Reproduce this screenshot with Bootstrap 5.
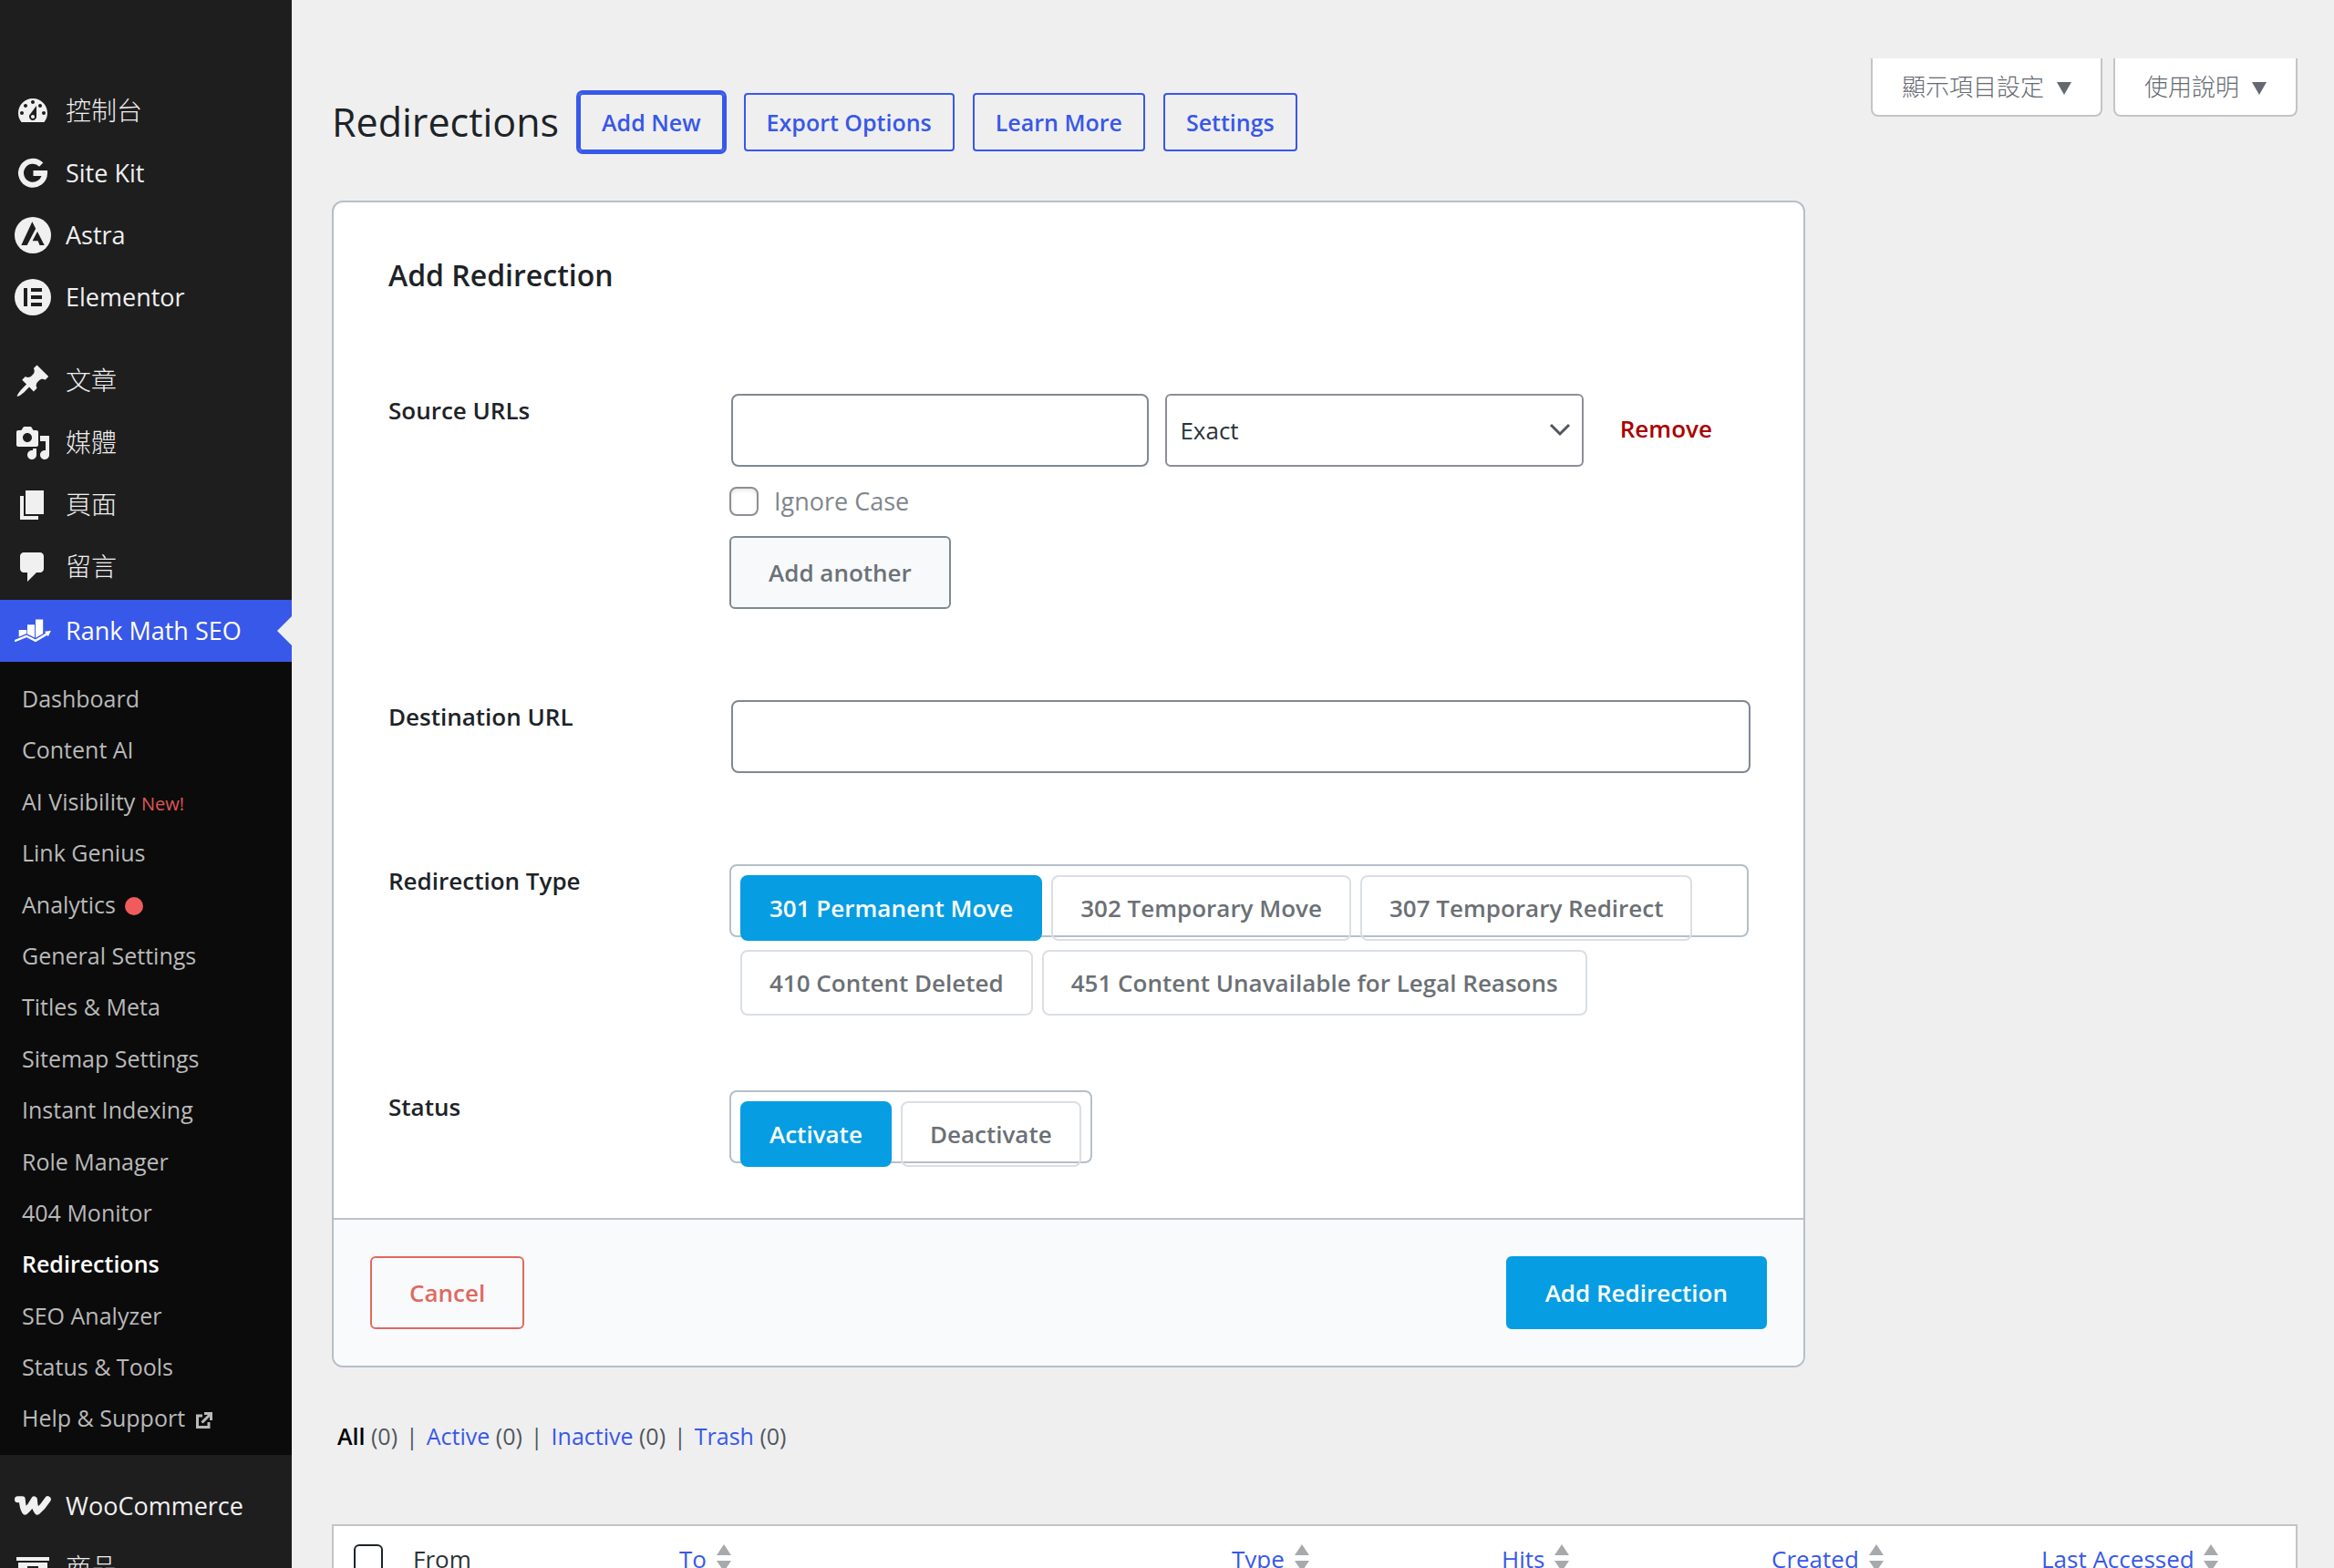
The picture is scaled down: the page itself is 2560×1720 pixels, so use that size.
<!DOCTYPE html>
<html lang="zh-Hant">
<head>
<meta charset="utf-8">
<meta name="viewport" content="width=device-width, initial-scale=1">
<title>Redirections</title>
<link href="https://cdn.jsdelivr.net/npm/bootstrap@5.3.0/dist/css/bootstrap.min.css" rel="stylesheet">
<style>
:root{--wp-blue:#3858e9;--rm-blue:#069de3;--rm-line:#b5bfc9;--wp-line:#c3c4c7}
body{background:#efefef;color:#2c3338;font-family:"Open Sans","Noto Sans CJK TC",sans-serif;font-size:26px;line-height:1.4}
a{text-decoration:none;color:var(--wp-blue)}
/* side menu */
.side-menu{width:320px;background:#1e1e1e;padding-top:88px}
.side-menu ul{list-style:none;margin:0;padding:0}
.menu-link{display:flex;align-items:center;gap:16px;height:68px;padding-left:16px;color:#f0f0f1;font-size:27px;white-space:nowrap}
.menu-link.han{font-size:28px;font-weight:300}
.menu-link svg{width:40px;height:40px;fill:currentColor;flex:none}
.menu-main{margin-bottom:24px!important}
.menu-content{margin-bottom:2px!important}
.menu-link.current{background:var(--wp-blue);color:#fff;position:relative}
.menu-link.current::after{content:"";position:absolute;right:0;top:18px;border:16px solid transparent;border-left:0;border-right-color:#efefef}
.side-menu .sub-menu{background:#0b0b0b;padding:12px 24px 12px;margin-bottom:22px}
.sub-menu li{line-height:1.4;padding:10px 0;white-space:nowrap}
.sub-menu a{color:#b9b9b9;font-size:25px}
.sub-menu a.current{color:#fff;font-weight:600}
.tag-new{color:#dd5753;font-size:20px}
.dot{width:20px;height:20px;background:#f05c5c;margin-left:4px;vertical-align:-2px}
.ext{width:20px;height:20px;fill:none;stroke:#b9b9b9;stroke-width:3;margin-left:4px;vertical-align:-3px}
/* content */
.content{padding:64px 40px 0 44px;min-width:0}
.page-title{font-size:43px;line-height:64px;color:#1d2327;font-weight:400;margin:0 22px 0 0}
.page-head{padding-top:38px;margin-bottom:54px}
.head-actions{gap:20px}
.btn-action{--bs-btn-color:var(--wp-blue);--bs-btn-border-color:var(--wp-blue);--bs-btn-hover-color:#fff;--bs-btn-hover-bg:var(--wp-blue);border-width:2px;border-radius:4px;height:64px;padding:0 23px;font-size:25px;font-weight:600;line-height:60px}
.btn-action.focused{box-shadow:0 0 0 3px var(--wp-blue);margin-right:2px}
.meta-tabs{gap:12px}
.meta-tab{background:#fff;border:2px solid var(--wp-line);border-top:0;border-radius:0 0 8px 8px;height:64px;padding:0 32px;color:#646970;font-size:26px;font-weight:300;display:flex;align-items:center;gap:14px}
.meta-tab::after{content:"";border:8px solid transparent;border-top:14px solid #646970;border-bottom:0;margin-top:4px}
.redirect-card{border:2px solid var(--rm-line);border-radius:12px;max-width:1616px;overflow:hidden}
.redirect-card .card-body{padding:56px 60px 60px}
.card-heading{font-size:32px;line-height:48px;font-weight:600;color:#1d2327;margin-bottom:106px}
.field-row+.field-row{margin-top:100px}
.field-label{width:374px;flex:none;font-size:26px;line-height:36px;font-weight:600;color:#1d2327}
.field-body{flex:1;min-width:0}
.field-body .form-control,.field-body .form-select{height:80px;border:2px solid #7e8993;font-size:26px;padding-left:14px;color:#2c3338}
.field-body .form-control{border-radius:8px;margin-left:2px}
.field-body .form-select{border-radius:6px;border-color:#8c8f94;background-image:url("data:image/svg+xml,%3Csvg xmlns='http://www.w3.org/2000/svg' viewBox='0 0 24 16'%3E%3Cpath d='M2 2l10 10L22 2' fill='none' stroke='%2350575e' stroke-width='3'/%3E%3C/svg%3E");background-size:24px 16px;background-position:right 12px center}
.source-row{gap:18px}
.source-row .form-control,.source-row .form-select{flex:0 0 41%;width:41%}
.remove-link{color:#a00;font-size:26px;line-height:36px;font-weight:600;margin-left:22px;padding-bottom:4px}
.tick{width:32px;height:32px;margin:0;border:2px solid #8c8f94;border-radius:8px!important;box-shadow:inset 0 2px 4px rgba(0,0,0,.1);flex:none}
.ignore-case{gap:17px;height:32px;margin:22px 0;color:#7f868d;font-size:27px}
.btn-panel{height:80px;border-width:2px;border-radius:6px;padding:0 41px;font-size:26px;font-weight:600}
.btn-another{--bs-btn-color:#6b7278;--bs-btn-bg:#f8f9fa;--bs-btn-border-color:#7e8993}
.btn-cancel{--bs-btn-color:#e0695f;--bs-btn-border-color:#e0695f}
.btn-submit{--bs-btn-color:#fff;--bs-btn-bg:var(--rm-blue);--bs-btn-border-color:var(--rm-blue)}
.field-tall{min-height:148px}
.choice-frame{height:80px;border:2px solid var(--rm-line);border-radius:8px;padding:10px;gap:10px;align-content:flex-start}
.choice{--bs-btn-color:#6b7075;--bs-btn-border-color:#dadfe4;--bs-btn-active-color:#fff;--bs-btn-active-bg:var(--rm-blue);--bs-btn-active-border-color:var(--rm-blue);border-width:2px;border-radius:8px;height:72px;line-height:68px;padding:0 30px;font-size:26px;font-weight:600;white-space:nowrap}
.redirect-card .card-footer{background:#f8fafc;border-top:2px solid #bcc1c7;padding:40px}
.filters{margin:55px 0 77px 6px;line-height:40px;font-size:25px;color:#50575e;gap:9px}
.filters .active-filter{color:#000;font-weight:600}
.list-table{border:2px solid var(--wp-line);background:#fff;table-layout:fixed;width:100%}
.list-table th{font-weight:400;font-size:26px;line-height:40px;padding:16px;white-space:nowrap;vertical-align:middle}
.list-table .tick{border-color:#1d2327;border-radius:6px!important;box-shadow:none;margin-left:6px;display:block}
.col-tick{width:72px}.col-from{width:292px}.col-num{width:296px}
.sorter{width:16px;height:30px;fill:#a7aaad;margin-left:4px;vertical-align:-4px}
</style>
</head>
<body>
<div class="d-flex vh-100 overflow-hidden">
<nav class="side-menu flex-shrink-0" aria-label="主選單">
<ul class="menu-main">
<li><a class="menu-link han" href="#"><svg viewBox="0 0 20 20"><path d="M3.76 16h12.48c1.1-1.37 1.76-3.11 1.76-5 0-4.42-3.58-8-8-8s-8 3.58-8 8c0 1.89.66 3.63 1.76 5zM10 4c.55 0 1 .45 1 1s-.45 1-1 1-1-.45-1-1 .45-1 1-1zM6 6c.55 0 1 .45 1 1s-.45 1-1 1-1-.45-1-1 .45-1 1-1zm8 0c.55 0 1 .45 1 1s-.45 1-1 1-1-.45-1-1 .45-1 1-1zm-5.37 5.55L12 7v6c0 1.1-.9 2-2 2s-2-.9-2-2c0-.57.24-1.08.63-1.45zM4 10c.55 0 1 .45 1 1s-.45 1-1 1-1-.45-1-1 .45-1 1-1zm12 0c.55 0 1 .45 1 1s-.45 1-1 1-1-.45-1-1 .45-1 1-1zm-5 3c0-.55-.45-1-1-1s-1 .45-1 1 .45 1 1 1 1-.45 1-1z"/></svg>控制台</a></li>
<li><a class="menu-link" href="#"><svg viewBox="0 0 40 40"><path d="M29.2 10.6A13 13 0 1 0 33 20H20.5" fill="none" stroke="currentColor" stroke-width="6"/></svg>Site Kit</a></li>
<li><a class="menu-link" href="#"><svg viewBox="0 0 40 40"><circle cx="20" cy="20" r="20"/><path fill="#1e1e1e" d="M19.3 5.3l3.9 7.4L13.7 31H7.3zM25 16l7.7 15h-5.2l-1.9-4.7h-6z"/></svg>Astra</a></li>
<li><a class="menu-link" href="#"><svg viewBox="0 0 40 40"><circle cx="20" cy="20" r="20"/><path fill="#1e1e1e" d="M10 10h4v20h-4zM18 10h12v4H18zM18 18h12v4H18zM18 26h12v4H18z"/></svg>Elementor</a></li>
</ul>
<ul class="menu-content">
<li><a class="menu-link han" href="#"><svg viewBox="0 0 20 20"><path d="M10.44 3.02l1.82-1.82 6.36 6.35-1.83 1.82c-1.05-.68-2.48-.57-3.41.36l-.75.75c-.92.93-1.04 2.35-.35 3.41l-1.83 1.82-2.41-2.41-2.8 2.79c-.42.42-3.38 2.71-3.8 2.29s1.86-3.39 2.28-3.81l2.79-2.79L4.1 9.36l1.83-1.82c1.05.69 2.48.57 3.4-.36l.75-.75c.93-.92 1.05-2.35.36-3.41z"/></svg>文章</a></li>
<li><a class="menu-link han" href="#"><svg viewBox="0 0 20 20"><path d="M13 11V4c0-.55-.45-1-1-1h-1.67L9 1H5L3.67 3H2c-.55 0-1 .45-1 1v7c0 .55.45 1 1 1h10c.55 0 1-.45 1-1zM7 4.5c1.38 0 2.5 1.12 2.5 2.5S8.38 9.5 7 9.5 4.5 8.38 4.5 7 5.62 4.5 7 4.5zM14 6h5v10.5c0 1.38-1.12 2.5-2.5 2.5S14 17.88 14 16.5s1.12-2.5 2.5-2.5c.17 0 .34.02.5.05V9h-3V6zm-4 8.05V13h2v3.5c0 1.38-1.12 2.5-2.5 2.5S7 17.88 7 16.5 8.12 14 9.5 14c.17 0 .34.02.5.05z"/></svg>媒體</a></li>
<li><a class="menu-link han" href="#"><svg viewBox="0 0 20 20"><path d="M6 15V2h10v13H6zm-1 1h8v2H3V5h2v11z"/></svg>頁面</a></li>
<li><a class="menu-link han" href="#"><svg viewBox="0 0 20 20"><path d="M5 2h9c1.1 0 2 .9 2 2v7c0 1.1-.9 2-2 2h-2l-5 5v-5H5c-1.1 0-2-.9-2-2V4c0-1.1.9-2 2-2z"/></svg>留言</a></li>
</ul>
<a class="menu-link current" href="#"><svg viewBox="0 0 40 40"><path d="M4.7 19h8.6v10H4.7zM14 13.3h8V30h-8zM23 7.6h8.2V28H23z"/><path d="M0 31.5L13 26l10 5 14-8" fill="none" stroke="#3858e9" stroke-width="5.5"/><path d="M0 31.2L13 25.8l10 5 12.5-7.4" fill="none" stroke="#fff" stroke-width="2.4"/><path d="M33 20.8l7-1-3.2 6.4z"/></svg>Rank Math SEO</a>
<ul class="sub-menu">
<li><a href="#">Dashboard</a></li>
<li><a href="#">Content AI</a></li>
<li><a href="#">AI Visibility <span class="tag-new">New!</span></a></li>
<li><a href="#">Link Genius</a></li>
<li><a href="#">Analytics <span class="dot d-inline-block rounded-circle"></span></a></li>
<li><a href="#">General Settings</a></li>
<li><a href="#">Titles &amp; Meta</a></li>
<li><a href="#">Sitemap Settings</a></li>
<li><a href="#">Instant Indexing</a></li>
<li><a href="#">Role Manager</a></li>
<li><a href="#">404 Monitor</a></li>
<li><a class="current" href="#" aria-current="page">Redirections</a></li>
<li><a href="#">SEO Analyzer</a></li>
<li><a href="#">Status &amp; Tools</a></li>
<li><a href="#">Help &amp; Support <svg class="ext" viewBox="0 0 20 20"><path d="M8 5H2.5v12.500H15V12M7.500 12.500L17 3M10 2.500h7.500V10"/></svg></a></li>
</ul>
<ul>
<li><a class="menu-link" href="#"><svg viewBox="0 0 40 40"><path d="M3.500 12.800h4.800q.4 9 3.200 13.200Q18 20.500 21.500 13q0 8.500 3.500 13Q31 21 36.300 12.800" fill="none" stroke="currentColor" stroke-width="7" stroke-linecap="round" stroke-linejoin="round"/></svg>WooCommerce</a></li>
<li><a class="menu-link han" href="#"><svg viewBox="0 0 20 20"><path d="M19 4v2H1V4h18zM2 7h16v10H2V7zm11 3V9H7v1h6z"/></svg>商品</a></li>
</ul>
</nav>
<main class="content flex-grow-1">
<div class="d-flex justify-content-between align-items-start">
<div class="page-head d-flex align-items-center">
<h1 class="page-title">Redirections</h1>
<div class="head-actions d-flex">
<a class="btn btn-action focused" href="#">Add New</a>
<a class="btn btn-action" href="#">Export Options</a>
<a class="btn btn-action" href="#">Learn More</a>
<a class="btn btn-action" href="#">Settings</a>
</div>
</div>
<div class="meta-tabs d-flex">
<button class="meta-tab" type="button">顯示項目設定</button>
<button class="meta-tab" type="button">使用說明</button>
</div>
</div>
<form class="card redirect-card">
<div class="card-body">
<h2 class="card-heading">Add Redirection</h2>
<div class="field-row d-flex">
<label class="field-label" for="source">Source URLs</label>
<div class="field-body">
<div class="source-row d-flex align-items-center">
<input class="form-control" id="source" type="text">
<select class="form-select" aria-label="Match type"><option>Exact</option></select>
<a class="remove-link" href="#">Remove</a>
</div>
<div class="ignore-case d-flex align-items-center">
<input class="form-check-input tick" type="checkbox" id="ignore"><label for="ignore">Ignore Case</label>
</div>
<button class="btn btn-panel btn-another d-block" type="button">Add another</button>
</div>
</div>
<div class="field-row d-flex">
<label class="field-label" for="dest">Destination URL</label>
<div class="field-body"><input class="form-control" id="dest" type="text"></div>
</div>
<div class="field-row field-tall d-flex">
<div class="field-label" id="type-label">Redirection Type</div>
<div class="field-body">
<div class="choice-frame d-flex flex-wrap" role="radiogroup" aria-labelledby="type-label">
<input class="btn-check" type="radio" name="type" id="t301" checked><label class="btn choice" for="t301">301 Permanent Move</label>
<input class="btn-check" type="radio" name="type" id="t302"><label class="btn choice" for="t302">302 Temporary Move</label>
<input class="btn-check" type="radio" name="type" id="t307"><label class="btn choice" for="t307">307 Temporary Redirect</label>
<input class="btn-check" type="radio" name="type" id="t410"><label class="btn choice" for="t410">410 Content Deleted</label>
<input class="btn-check" type="radio" name="type" id="t451"><label class="btn choice" for="t451">451 Content Unavailable for Legal Reasons</label>
</div>
</div>
</div>
<div class="field-row d-flex">
<div class="field-label" id="status-label">Status</div>
<div class="choice-frame d-flex" role="radiogroup" aria-labelledby="status-label">
<input class="btn-check" type="radio" name="status" id="son" checked><label class="btn choice" for="son">Activate</label>
<input class="btn-check" type="radio" name="status" id="soff"><label class="btn choice" for="soff">Deactivate</label>
</div>
</div>
</div>
<div class="card-footer d-flex justify-content-between">
<button class="btn btn-panel btn-cancel" type="button">Cancel</button>
<button class="btn btn-panel btn-submit" type="submit">Add Redirection</button>
</div>
</form>
<div class="filters d-flex">
<span><a class="active-filter" href="#">All</a> (0)</span><span>|</span>
<span><a href="#">Active</a> (0)</span><span>|</span>
<span><a href="#">Inactive</a> (0)</span><span>|</span>
<span><a href="#">Trash</a> (0)</span>
</div>
<table class="list-table">
<thead><tr>
<th class="col-tick"><input class="form-check-input tick" type="checkbox" aria-label="Select all"></th>
<th class="col-from">From</th>
<th><a href="#">To <svg class="sorter" viewBox="0 0 16 30"><path d="M8 0l8 12H0zM8 30l8-12H0z"/></svg></a></th>
<th class="col-num"><a href="#">Type <svg class="sorter" viewBox="0 0 16 30"><path d="M8 0l8 12H0zM8 30l8-12H0z"/></svg></a></th>
<th class="col-num"><a href="#">Hits <svg class="sorter" viewBox="0 0 16 30"><path d="M8 0l8 12H0zM8 30l8-12H0z"/></svg></a></th>
<th class="col-num"><a href="#">Created <svg class="sorter" viewBox="0 0 16 30"><path d="M8 0l8 12H0zM8 30l8-12H0z"/></svg></a></th>
<th class="col-num"><a href="#">Last Accessed <svg class="sorter" viewBox="0 0 16 30"><path d="M8 0l8 12H0zM8 30l8-12H0z"/></svg></a></th>
</tr></thead>
</table>
</main>
</div>
<script src="https://cdn.jsdelivr.net/npm/bootstrap@5.3.0/dist/js/bootstrap.bundle.min.js"></script>
</body>
</html>
